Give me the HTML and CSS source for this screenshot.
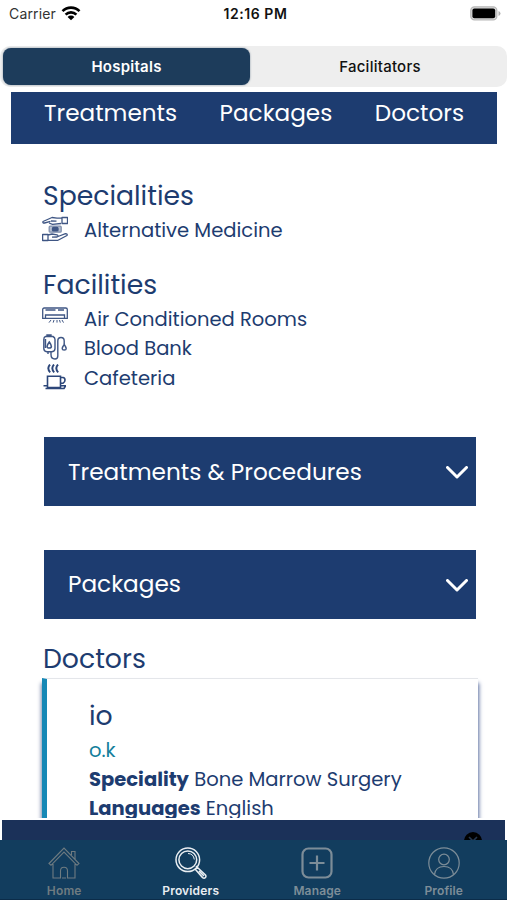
FILE: index.html
```html
<!DOCTYPE html>
<html lang="en">
<head>
    <meta charset="UTF-8">
    <meta name="viewport" content="width=device-width, initial-scale=1.0">
    <title>Hospitals</title>
    <link rel="stylesheet" href="styles.css">
</head>
<body>

    <!-- Status bar -->
    <div class="status-bar">
        <div class="carrier">
            <span>Carrier</span>
            <svg width="20" height="15" viewBox="0 0 20 15" fill="none" stroke="#000" stroke-width="2.6">
                <path d="M1.5 5.2a12 12 0 0 1 17 0M4.6 8.6a7.6 7.6 0 0 1 10.8 0"/>
                <path d="M10 14.2L6.6 10.9a4.8 4.8 0 0 1 6.8 0z" fill="#000" stroke="none"/>
            </svg>
        </div>
        <div class="time">12:16 PM</div>
        <svg class="battery" width="31" height="15" viewBox="0 0 31 15">
            <rect x=".8" y=".8" width="26" height="13" rx="3.6" fill="#ddd" stroke="#b8b8b8" stroke-width="1.3"/>
            <rect x="2.4" y="2.4" width="22.8" height="9.8" rx="2" fill="#000"/>
            <path d="M28.5 5v5q2-.8 2-2.5T28.5 5z" fill="#b0b0b0"/>
        </svg>
    </div>

    <div class="segments">
        <button class="segment active">Hospitals</button>
        <button class="segment">Facilitators</button>
    </div>

    <div class="page">
        <nav class="section-nav">
            <a>Treatments</a>
            <a>Packages</a>
            <a>Doctors</a>
        </nav>

        <section class="specialities">
            <h2>Specialities</h2>
            <div class="item">
                <svg width="26" height="26" viewBox="0 0 26 26" fill="none" stroke="#3f5684" stroke-width="1.3" stroke-linejoin="round">
                    <path d="M20 1.5h5.5v6H20zM20 2.2h-5L10 1.5 1 5.5q-.6 1.6 1.5 1.5l6-1.6M7 7l3.5 1.3L19 7.500M9 5l5.5.2"/>
                    <path d="M.6 18.500H6v6H.6zM6 19l4-1 5 .8q2 1.2 0 2.2l-5 .2M6 24.300h10l9-4.800q.8-1.7-1.5-1.800L16 20.500"/>
                    <rect x="7.2" y="10.2" width="12" height="6" rx="1" fill="#b5bfd0" stroke="#8190ad"/>
                    <rect x="10.5" y="11.400" width="5.5" height="3.500" rx="1" fill="#3f5684"/>
                </svg>
                <span>Alternative Medicine</span>
            </div>
        </section>

        <section class="facilities">
            <h2>Facilities</h2>
            <div class="item">
                <svg width="26" height="26" viewBox="0 0 26 26" fill="none" stroke="#3f5684" stroke-width="1.3">
                    <path d="M.7 4.500q0-1.5 1.500-1.500h21.600q1.500 0 1.500 1.500v8.800H.7zM3.500 13.300v-3.300h19v3.300M3.500 5h10M16 5h6"/>
                    <path d="M9 15l-2 2.600M12 15l-.8 2.600M15 15v2.600M17.500 15l.8 2.600M20 15l1.500 2.600" stroke-width="1"/>
                </svg>
                <span>Air Conditioned Rooms</span>
            </div>
            <div class="item">
                <svg width="26" height="26" viewBox="0 0 26 26" fill="none" stroke="#3f5684" stroke-width="1.4">
                    <path d="M3.500 2.500h7.500q2 1 2 3v9q0 3-3 3.200H4.800q-3-.2-3-3.200v-9q0-2.500 1.700-3zM5 2.500V1h4v1.500M3.500 5v9"/>
                    <path d="M7.300 8q4.200 6-.1 6T7.300 8z" stroke-width="1.6"/>
                    <path d="M6 18v2M9 18v2.500q0 4.500 4 4.500 2.800 0 2.800-3V7q0-3.500 3.200-3.500T22.200 7v3"/>
                    <path d="M22.200 10.500q-4 5.500 0 5.500t0-5.500z"/>
                </svg>
                <span>Blood Bank</span>
            </div>
            <div class="item">
                <svg width="26" height="26" viewBox="0 0 26 26" fill="none" stroke="#2c4679" stroke-width="1.6">
                    <path d="M8 .5q-3.500 4 .2 7.800M12 .5q-3.500 4 .2 7.800M16 .5q-3.500 4 .2 7.800" stroke-width="1.9"/>
                    <path d="M5.500 12.200h13v11.300h-13zM18.500 13.500h2.500q2 .2 2 2.500t-2 3.200h-2.500M1.500 21.800h4M18.500 21.800h5.500M3.500 24.500h18.500l1.500-2.500"/>
                </svg>
                <span>Cafeteria</span>
            </div>
        </section>

        <div class="accordion">
            <span>Treatments &amp; Procedures</span>
            <svg class="chevron" width="22" height="13" viewBox="0 0 22 13"><path d="M1.500 1.500L11 11l9.500-9.500"/></svg>
        </div>
        <div class="accordion">
            <span>Packages</span>
            <svg class="chevron" width="22" height="13" viewBox="0 0 22 13"><path d="M1.500 1.500L11 11l9.500-9.500"/></svg>
        </div>

        <section class="doctors">
            <h2>Doctors</h2>
            <div class="doctor-card">
                <h3>io</h3>
                <p class="degree">o.k</p>
                <p><strong>Speciality</strong> Bone Marrow Surgery</p>
                <p><strong>Languages</strong> English</p>
            </div>
        </section>
    </div>

    <div class="footer-strip">
        <svg width="18" height="18" viewBox="0 0 18 18">
            <circle cx="9" cy="9" r="9" fill="#000"/>
            <path d="M5 5l4 4 4-4" fill="none" stroke="#24364e" stroke-width="1.6"/>
        </svg>
    </div>

    <!-- Bottom tabs -->
    <div class="tab-bar">
        <div class="tab home">
            <svg width="32" height="32" viewBox="0 0 32 32" fill="none" stroke="#6e7b81" stroke-width="1.1">
                <path d="M1 16.500L16 1l15 15.500-2 1.800L16 5 3 18.300zM5 17v14h7.500v-7q0-3.800 3.500-3.800t3.500 3.800v7H27V17M23.500 8V4.500H27v7.500M14 31h4"/>
            </svg>
            <span>Home</span>
        </div>
        <div class="tab active">
            <svg width="32" height="32" viewBox="0 0 32 32" fill="none" stroke="#e9eef2" stroke-width="1.5">
                <circle cx="12.8" cy="12.8" r="11.8"/>
                <circle cx="12.8" cy="12.8" r="8.9"/>
                <path d="M13 6.500q5.500.2 6.300 6" stroke-width="1"/>
                <path d="M20.500 22.500l2-2 8 7.500q1 1.500-.2 2.600t-2.700 0zM21 19l1.500 1.500M24 24l5 5"/>
            </svg>
            <span>Providers</span>
        </div>
        <div class="tab">
            <svg width="32" height="32" viewBox="0 0 32 32" fill="none" stroke="#7d8d98" stroke-width="2.2">
                <rect x="1.500" y="1.500" width="29" height="29" rx="6"/>
                <path d="M16 8.500v15M8.500 16h15"/>
            </svg>
            <span>Manage</span>
        </div>
        <div class="tab">
            <svg width="32" height="32" viewBox="0 0 32 32" fill="none" stroke="#7d8d98" stroke-width="1.2">
                <circle cx="16" cy="16" r="15.2"/>
                <circle cx="16" cy="12.5" r="5.3"/>
                <path d="M6.500 27.500q1-8 9.500-8t9.500 8"/>
            </svg>
            <span>Profile</span>
        </div>
    </div>

</body>
</html>
```

FILE: styles.css
```css
* {
    box-sizing: border-box;
}

body {
    margin: 0;
    width: 507px;
    height: 900px;
    overflow: hidden;
    display: flex;
    flex-direction: column;
    background-color: #fff;
    color: #1d3c70;
    font-family: Poppins, Inter, sans-serif;
}

h2, h3, p {
    margin: 0;
    font-weight: 400;
}

svg {
    flex: none;
    display: block;
}

/* Status bar */
.status-bar {
    height: 46px;
    padding: 6px 6px 0 9px;
    display: grid;
    grid-template-columns: 1fr auto 1fr;
    align-items: start;
    font-family: Inter, sans-serif;
    font-size: 14px;
    line-height: 16px;
    color: #111;
}

.carrier {
    display: flex;
    gap: 5px;
    color: #333;
    letter-spacing: 0.15px;
}

.time {
    font-weight: 600;
    letter-spacing: 0.55px;
    margin-right: -1px;
}

.battery {
    justify-self: end;
}

/* Segmented control */
.segments {
    height: 41px;
    padding: 2px 3px;
    display: flex;
    background-color: #eee;
    border-radius: 10px;
    flex: none;
}

.segment {
    flex: 1;
    border: none;
    padding: 0 0 0 6px;
    border-radius: 8px;
    background: none;
    font: 500 15px Inter, sans-serif;
    letter-spacing: 0.25px;
    color: #111;
}

.segment.active {
    flex: 0 0 247px;
    padding: 0;
    background-color: #1d3c5b;
    color: #fff;
    font-weight: 600;
    box-shadow: 0 0 2px #789;
}

/* Page content */
.page {
    height: 731px;
    flex: none;
    overflow: hidden;
    margin: 0 9px 0 10px;
    padding: 5px 1px 0;
}

.section-nav {
    height: 52px;
    padding: 0 33px;
    display: flex;
    justify-content: space-between;
    background-color: #1d3c70;
    color: #fff;
    font-size: 23.15px;
    line-height: 43px;
}

section {
    padding-left: 32px;
}

h2 {
    font-size: 26.7px;
    line-height: 36px;
}

.specialities {
    padding-top: 34px;
}

.facilities {
    padding-top: 24px;
}

.item {
    height: 29.3px;
    display: flex;
    align-items: center;
    gap: 16px;
    font-size: 19.55px;
}

.item svg {
    margin-left: -1px;
}

.item span {
    padding-top: 2px;
}

.accordion {
    height: 69px;
    margin: 43.5px 21px 0 33px;
    padding: 0 8px 0 24px;
    display: flex;
    align-items: center;
    justify-content: space-between;
    background-color: #1d3c70;
    color: #fff;
    font-size: 23.2px;
}

.facilities + .accordion {
    margin-top: 46px;
}

.chevron {
    margin-top: 2px;
    fill: none;
    stroke: #fff;
    stroke-width: 3;
    stroke-linecap: round;
    stroke-linejoin: round;
}

.doctors {
    padding-top: 22px;
}

.doctor-card {
    width: 436px;
    height: 180px;
    margin-top: 1px;
    margin-left: -1px;
    padding: 19px 0 0 42px;
    border-left: 5px solid #1688b5;
    border-top: 1px solid #e4e6ea;
    background-color: #fff;
    box-shadow: 2px 4px 4px -1px #5b6fa0, -2px 4px 4px -1px #8390ad;
    font-size: 19.55px;
    line-height: 29.3px;
}

.doctor-card h3 {
    margin-bottom: 2px;
    font-size: 26.7px;
    line-height: 36px;
}

.degree {
    color: #15809c;
}

strong {
    font-weight: 700;
}

.footer-strip {
    height: 22px;
    flex: none;
    margin: 0 2px;
    padding: 12px 23px 0 0;
    border-top: 2px solid #fff;
    display: flex;
    justify-content: flex-end;
    background-color: #1b3159;
    overflow: hidden;
}

/* Bottom tabs */
.tab-bar {
    height: 60px;
    flex: none;
    display: grid;
    grid-template-columns: repeat(4, 1fr);
    padding-left: 1px;
    background-color: #123d5e;
    border-bottom: 1px solid #0b2c49;
    font-family: Inter, sans-serif;
}

.tab {
    padding-top: 7px;
    display: flex;
    flex-direction: column;
    align-items: center;
    gap: 5px;
    color: #7d8d98;
    font-size: 12px;
    font-weight: 600;
    letter-spacing: 0.15px;
    line-height: 14px;
}

.tab.home {
    color: #6e7b81;
}

.tab.active {
    color: #e9eef2;
}
```
